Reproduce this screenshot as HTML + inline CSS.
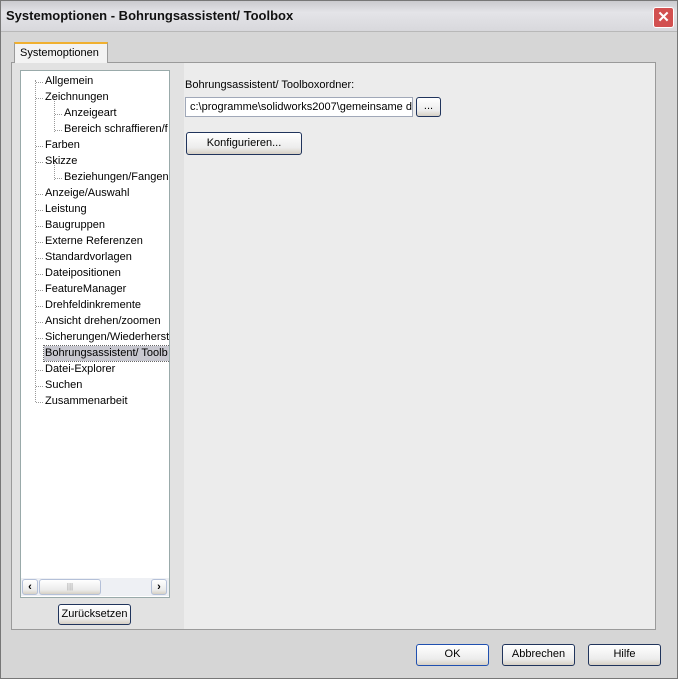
<!DOCTYPE html><html><head><style>
*{margin:0;padding:0;box-sizing:border-box}
body{width:678px;height:679px;overflow:hidden;background:#d6d6d6;font-family:"Liberation Sans",sans-serif;font-size:11px;color:#000;position:relative}
.abs{position:absolute}
.title{left:0;top:0;width:678px;height:32px;background:linear-gradient(#c8c8cc,#e4e4e8 40%,#d8d8dc);border-bottom:1px solid #b8b8b8}
.title span{position:absolute;left:6px;top:8px;font-weight:bold;font-size:13px;color:#111}
.close{left:653px;top:7px;width:21px;height:21px;background:#d25050;border:1px solid #fff;border-radius:3px;color:#fff;font-size:15px;text-align:center;line-height:19px;font-weight:bold}
.frame{left:0;top:0;width:678px;height:679px;border:1px solid #777}
.tab{left:14px;top:42px;width:94px;height:21px;background:#f3f3f3;border:1px solid #9a9a9a;border-bottom:none;border-top:2px solid #f0b030;padding:3px 0 0 5px}
.panel{left:11px;top:62px;width:645px;height:568px;background:#e2e2e2;border:1px solid #9a9a9a}
.right{left:184px;top:63px;width:471px;height:566px;background:#ececec}
.tree{left:20px;top:70px;width:150px;height:528px;background:#fff;border:1px solid #9aa;}
.it{position:absolute;white-space:nowrap;height:15px;line-height:15px}
.it.t::before{content:"";position:absolute;left:-9px;top:8px;width:7px;border-top:1px dotted #999}
.btn{position:absolute;border:1px solid #20345c;border-radius:3px;background:linear-gradient(#fff,#ececec 70%,#d6d0c4);text-align:center;line-height:19px}
.sb{left:21px;top:578px;width:148px;height:18px;background:#eef0f4}
</style></head><body>
<div class="abs title"><span>Systemoptionen - Bohrungsassistent/ Toolbox</span></div>
<div class="abs close">✕</div>
<div class="abs panel"></div>
<div class="abs right"></div>
<div class="abs tab">Systemoptionen</div>
<div class="abs tree">
<div style="position:absolute;left:14px;top:9px;height:322px;border-left:1px dotted #999"></div>
<div style="position:absolute;left:33px;top:25px;height:36px;border-left:1px dotted #999"></div>
<div style="position:absolute;left:33px;top:89px;height:20px;border-left:1px dotted #999"></div>
</div>
<div class="abs" style="left:21px;top:72px;width:148px;height:505px;overflow:hidden">
<div class="it t" style="left:24px;top:2px">Allgemein</div>
<div class="it t" style="left:24px;top:18px">Zeichnungen</div>
<div class="it t" style="left:43px;top:34px">Anzeigeart</div>
<div class="it t" style="left:43px;top:50px">Bereich schraffieren/f</div>
<div class="it t" style="left:24px;top:66px">Farben</div>
<div class="it t" style="left:24px;top:82px">Skizze</div>
<div class="it t" style="left:43px;top:98px">Beziehungen/Fangen</div>
<div class="it t" style="left:24px;top:114px">Anzeige/Auswahl</div>
<div class="it t" style="left:24px;top:130px">Leistung</div>
<div class="it t" style="left:24px;top:146px">Baugruppen</div>
<div class="it t" style="left:24px;top:162px">Externe Referenzen</div>
<div class="it t" style="left:24px;top:178px">Standardvorlagen</div>
<div class="it t" style="left:24px;top:194px">Dateipositionen</div>
<div class="it t" style="left:24px;top:210px">FeatureManager</div>
<div class="it t" style="left:24px;top:226px">Drehfeldinkremente</div>
<div class="it t" style="left:24px;top:242px">Ansicht drehen/zoomen</div>
<div class="it t" style="left:24px;top:258px">Sicherungen/Wiederherst</div>
<div class="it" style="left:23px;top:274px;background:#c8c8d0;outline:1px dotted #666;padding-left:1px;width:130px">Bohrungsassistent/ Toolb</div>
<div class="it t" style="left:24px;top:290px">Datei-Explorer</div>
<div class="it t" style="left:24px;top:306px">Suchen</div>
<div class="it t" style="left:24px;top:322px">Zusammenarbeit</div>
</div>
<div class="abs sb"></div>
<div class="btn" style="left:22px;top:579px;width:16px;height:16px;line-height:14px;border-color:#b4c0d8;font-weight:bold">‹</div>
<div class="btn" style="left:39px;top:579px;width:62px;height:16px;line-height:14px;border-color:#b4c0d8;color:#999;font-size:8px">|||</div>
<div class="btn" style="left:151px;top:579px;width:16px;height:16px;line-height:14px;border-color:#b4c0d8;font-weight:bold">›</div>
<div class="btn" style="left:58px;top:604px;width:73px;height:21px">Zurücksetzen</div>
<div class="it abs" style="left:185px;top:78px">Bohrungsassistent/ Toolboxordner:</div>
<div class="abs" style="left:185px;top:97px;width:228px;height:20px;background:#fff;border:1px solid #a0a8b8;padding:3px 0 0 4px;white-space:nowrap;overflow:hidden">c:\programme\solidworks2007\gemeinsame d</div>
<div class="btn" style="left:416px;top:97px;width:25px;height:20px;line-height:17px">...</div>
<div class="btn" style="left:186px;top:132px;width:116px;height:23px;line-height:21px">Konfigurieren...</div>
<div class="btn" style="left:416px;top:644px;width:73px;height:22px;border-color:#2050b0">OK</div>
<div class="btn" style="left:502px;top:644px;width:73px;height:22px">Abbrechen</div>
<div class="btn" style="left:588px;top:644px;width:73px;height:22px">Hilfe</div>
<div class="abs frame"></div>
</body></html>
